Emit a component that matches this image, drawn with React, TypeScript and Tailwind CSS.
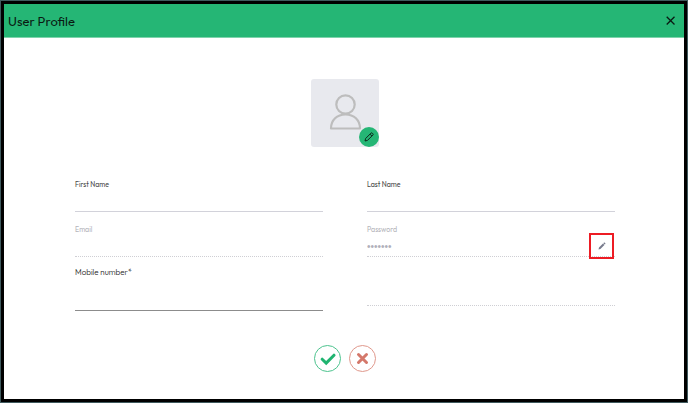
import { useState } from "react";
import type { ReactNode } from "react";

interface FieldProps {
  id: string;
  label: string;
  type?: string;
  value?: string;
  disabled?: boolean;
  required?: boolean;
  children?: ReactNode;
}

function Field({ id, label, type = "text", value = "", disabled, required, children }: FieldProps) {
  const [text, setText] = useState(value);

  return (
    <div
      className={`relative flex flex-col border-b ${
        disabled
          ? "border-dotted border-[#cfcfd4]"
          : required
            ? "border-[#8c8c8c]"
            : "border-[#d2d2da]"
      }`}
    >
      <label
        htmlFor={id}
        className={`leading-3 ${required ? "text-[8px] font-light" : "text-[7px]"} ${
          disabled ? "text-[#b4b4ba]" : required ? "text-[#1c1c1c]" : "text-[#484848]"
        }`}
      >
        {label}
        {required && "*"}
      </label>
      <input
        id={id}
        type={type}
        value={text}
        onChange={(e) => setText(e.target.value)}
        disabled={disabled}
        required={required}
        className={`w-full bg-transparent font-['Liberation_Sans',sans-serif] text-[10px] outline-none ${
          required ? "h-8" : "h-5"
        } ${disabled ? "text-[#b0b0ba]" : "text-[#3a3a3a]"}`}
      />
      {children}
    </div>
  );
}

export default function App() {
  return (
    <div className="min-h-screen bg-[#3f5a5e] p-px font-[Outfit,Lato,sans-serif]">
      <main className="flex min-h-[calc(100vh-2px)] flex-col border-3 border-black bg-white">
        <header className="flex h-[34px] items-center justify-between border-b border-[#7fd3ac] bg-[#25b675] pr-2 pl-1 text-[#0a1a13]">
          <h1 className="text-[13px] leading-4">User Profile</h1>
          <button type="button" aria-label="Close">
            <svg viewBox="0 0 11 11" className="size-[11px]" fill="none" stroke="currentColor" strokeWidth="1.3">
              <path d="M1.700 1.700l7.800 7.800M9.500 1.700L1.700 9.500" />
            </svg>
          </button>
        </header>

        <form className="pt-[41px] pr-[69px] pl-[71px]" onSubmit={(e) => e.preventDefault()}>
          <div className="relative mx-auto size-[68px] rounded-[3px] bg-[#e8e9ee]">
            <svg viewBox="0 0 68 68" className="size-full" fill="none" stroke="#bdbdbd" strokeWidth="2.2">
              <circle cx="34.500" cy="25.500" r="9.200" />
              <path d="M20 49.500c0-8.500 6-14 14.500-14s14.500 5.500 14.500 14z" strokeLinejoin="round" />
            </svg>
            <button
              type="button"
              aria-label="Change photo"
              className="absolute right-0 bottom-0 flex size-5 items-center justify-center rounded-full bg-[#25b675] text-[#0a1a13]"
            >
              <svg viewBox="0 0 10 10" className="size-2.5" fill="none" stroke="currentColor" strokeWidth="0.9" strokeLinejoin="round">
                <path d="M1 9l.6-2.500 5.400-5.400q.6-.6 1.200 0l.7.7q.6.6 0 1.200L3.500 8.400zM6 2.100L7.900 4" />
              </svg>
            </button>
          </div>

          <div className="mt-8 grid grid-cols-2 gap-x-11">
            <div className="flex flex-col">
              <Field id="first-name" label="First Name" />
              <div className="mt-3">
                <Field id="email" label="Email" type="email" disabled />
              </div>
              <div className="mt-[9px]">
                <Field id="mobile" label="Mobile number" type="tel" required />
              </div>
            </div>

            <div className="flex flex-col">
              <Field id="last-name" label="Last Name" />
              <div className="mt-3">
                <Field id="password" label="Password" type="password" value="secret7" disabled>
                  <button
                    type="button"
                    aria-label="Edit password"
                    className="absolute right-px -bottom-[3px] flex h-[26px] w-[25px] items-center justify-center border-2 border-[#ed1c24]"
                  >
                    <svg viewBox="0 0 8 8" className="size-2" fill="#777a8c">
                      <path d="M.5 7.500l.5-1.900 4-4L6.400 3l-4 4zM5.400 1.200l.6-.6q.3-.3.6 0l.8.8q.3.3 0 .6l-.6.6z" />
                    </svg>
                  </button>
                </Field>
              </div>
              <div className="h-[49px] border-b border-dotted border-[#cfcfd4]" />
            </div>
          </div>

          <div className="mt-[34px] mb-6 flex justify-center gap-2">
            <button
              type="submit"
              aria-label="Save"
              className="flex size-[27px] items-center justify-center rounded-full border border-[#4cc38e] text-[#1fb470]"
            >
              <svg viewBox="0 0 16 14" className="h-3.5 w-4" fill="none" stroke="currentColor" strokeWidth="3">
                <path d="M2.200 7.200l4 3.900L14 3.200" strokeLinecap="round" />
              </svg>
            </button>
            <button
              type="button"
              aria-label="Cancel"
              className="flex size-[27px] items-center justify-center rounded-full border border-[#e0988c] text-[#d4786b]"
            >
              <svg viewBox="0 0 13 13" className="size-[13px]" fill="none" stroke="currentColor" strokeWidth="3">
                <path d="M2.500 2.500l8 8M10.500 2.500l-8 8" strokeLinecap="round" />
              </svg>
            </button>
          </div>
        </form>
      </main>
    </div>
  );
}
